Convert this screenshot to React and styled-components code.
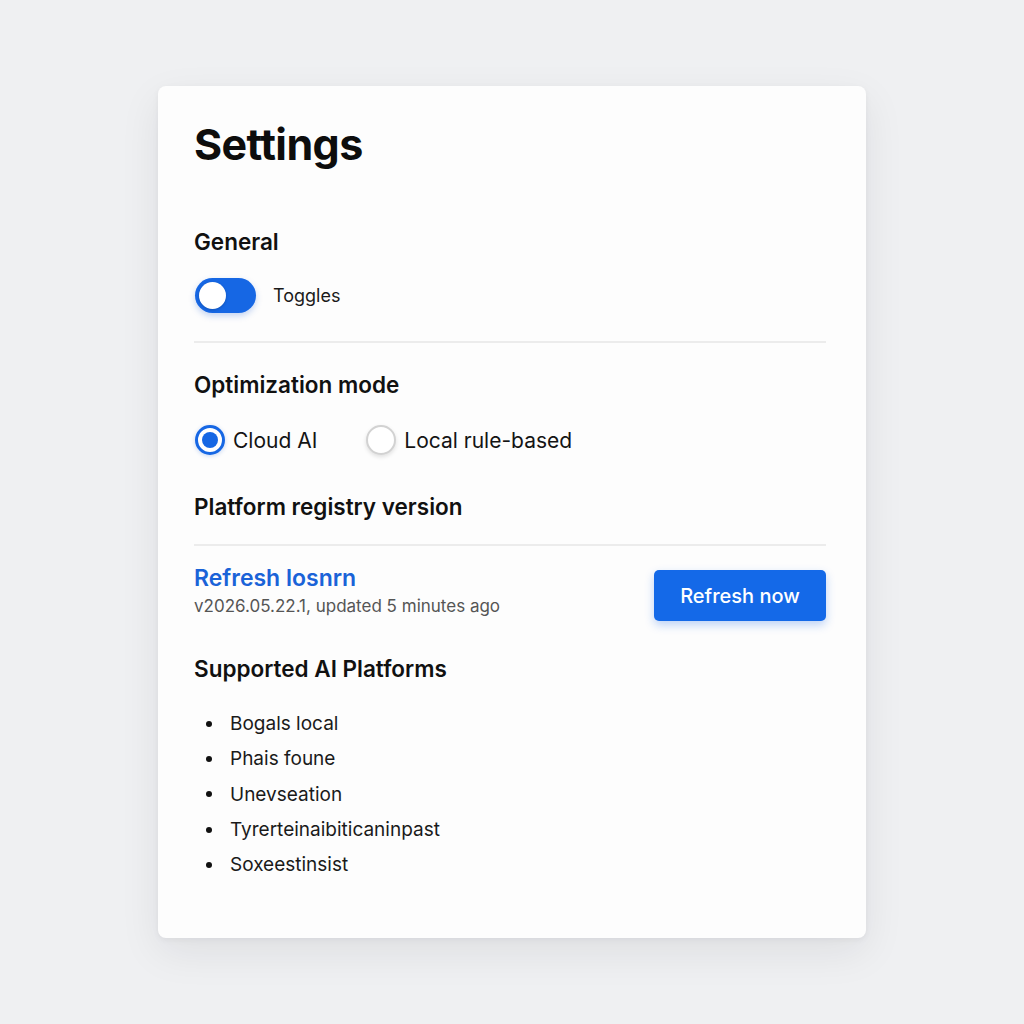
import React from 'react';
import styled, { createGlobalStyle, css } from 'styled-components';

const GlobalStyle = createGlobalStyle`
  html, body {
    margin:0;
    padding:0;
    background:#eff0f2;
  }
  body {
    font-family:Inter, "Liberation Sans", sans-serif;
    color:#111;
    -webkit-font-smoothing:antialiased;
  }
`;

const platforms = [
  'Bogals local',
  'Phais foune',
  'Unevseation',
  'Tyrerteinaibiticaninpast',
  'Soxeestinsist',
];

export default function App() {
  return (
    <>
      <GlobalStyle />
      <Page>
        <Card>
          <Title>Settings</Title>

          <Heading top={60}>General</Heading>
          <ToggleRow>
            <Switch>
              <Knob />
            </Switch>
            <ToggleLabel>Toggles</ToggleLabel>
          </ToggleRow>

          <Divider top={28} />

          <Heading top={28}>Optimization mode</Heading>
          <RadioGroup>
            <RadioOption>
              <Radio checked />
              <RadioLabel>Cloud AI</RadioLabel>
            </RadioOption>
            <RadioOption>
              <Radio />
              <RadioLabel>Local rule-based</RadioLabel>
            </RadioOption>
          </RadioGroup>

          <Heading top={38}>Platform registry version</Heading>
          <Divider top={23} />

          <RegistryRow>
            <RegistryInfo>
              <LinkTitle>Refresh losnrn</LinkTitle>
              <Meta>v2026.05.22.1, updated 5 minutes ago</Meta>
            </RegistryInfo>
            <PrimaryButton>Refresh now</PrimaryButton>
          </RegistryRow>

          <Heading top={34}>Supported AI Platforms</Heading>
          <List>
            {platforms.map((name) => (
              <Item key={name}>
                <Bullet />
                {name}
              </Item>
            ))}
          </List>
        </Card>
      </Page>
    </>
  );
}

const Page = styled.div`
  min-height:1024px;
  padding-top:86px;
  box-sizing:border-box;
`;

const Card = styled.div`
  width:708px;
  height:852px;
  margin:0 auto;
  box-sizing:border-box;
  padding:34px 40px 0 36px;
  background:#fdfdfd;
  border-radius:8px;
  box-shadow:0 14px 40px rgba(20, 24, 40, 0.08), 0 2px 6px rgba(20, 24, 40, 0.05);
`;

const Title = styled.h1`
  margin:0;
  font-size:43px;
  line-height:48px;
  font-weight:700;
  letter-spacing:-0.6px;
  color:#0d0d0d;
`;

const Heading = styled.h2`
  margin:${({ top }) => top}px 0 0;
  font-size:22.5px;
  line-height:28px;
  font-weight:600;
  color:#111;
`;

const ToggleRow = styled.div`
  display:flex;
  align-items:center;
  gap:17px;
  margin-top:22px;
  padding-left:1px;
`;

const Switch = styled.div`
  position:relative;
  width:61px;
  height:35px;
  border-radius:18px;
  background:#1667e4;
  box-shadow:0 3px 6px rgba(22, 90, 210, 0.25);
`;

const Knob = styled.span`
  position:absolute;
  top:4px;
  left:4px;
  width:27px;
  height:27px;
  border-radius:50%;
  background:#fff;
  box-shadow:0 1px 3px rgba(0, 0, 0, 0.2);
`;

const ToggleLabel = styled.span`
  font-size:18px;
  color:#1a1a1a;
`;

const Divider = styled.hr`
  margin:${({ top }) => top}px 0 0;
  border:0;
  height:2px;
  background:#ececec;
`;

const RadioGroup = styled.div`
  display:flex;
  align-items:center;
  gap:49px;
  margin-top:26px;
  padding-left:1px;
`;

const RadioOption = styled.label`
  display:flex;
  align-items:center;
  gap:8px;
`;

const Radio = styled.span`
  position:relative;
  width:30px;
  height:30px;
  box-sizing:border-box;
  border-radius:50%;
  background:#fff;
  ${({ checked }) => checked ? css`
    border:3px solid #1667e4;
    box-shadow:0 1px 4px rgba(22, 90, 210, 0.25);
    &::after {
      content:'';
      position:absolute;
      top:4px;
      left:4px;
      width:16px;
      height:16px;
      border-radius:50%;
      background:#1667e4;
    }
  ` : css`
    border:2px solid #d2d2d2;
    box-shadow:0 2px 4px rgba(0, 0, 0, 0.12);
  `}
`;

const RadioLabel = styled.span`
  font-size:21px;
  color:#141414;
`;

const RegistryRow = styled.div`
  display:flex;
  align-items:flex-start;
  justify-content:space-between;
  margin-top:18px;
`;

const RegistryInfo = styled.div`
  display:flex;
  flex-direction:column;
`;

const LinkTitle = styled.span`
  font-size:23px;
  line-height:28px;
  font-weight:600;
  color:#1a63d8;
`;

const Meta = styled.span`
  margin-top:3px;
  font-size:17px;
  line-height:22px;
  color:#555;
`;

const PrimaryButton = styled.button`
  width:172px;
  height:51px;
  margin-top:6px;
  border:0;
  border-radius:5px;
  background:#1469e8;
  color:#fff;
  font-family:inherit;
  font-size:20px;
  font-weight:500;
  box-shadow:0 4px 10px rgba(20, 100, 230, 0.28);
`;

const List = styled.ul`
  list-style:none;
  margin:23px 0 0;
  padding:0;
`;

const Item = styled.li`
  display:flex;
  align-items:center;
  height:35.3px;
  font-size:19px;
  color:#1a1a1a;
`;

const Bullet = styled.span`
  width:6px;
  height:6px;
  margin:0 18px 0 12px;
  border-radius:50%;
  background:#111;
`;
